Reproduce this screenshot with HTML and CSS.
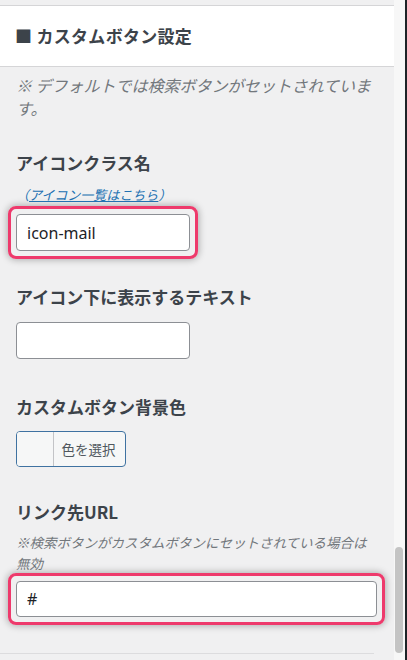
FILE: index.html
```html
<!DOCTYPE html>
<html lang="ja">
<head>
<meta charset="utf-8">
<title>カスタムボタン設定</title>
<link rel="stylesheet" href="styles.css">
</head>
<body>
<div class="frame">
  <div class="panel">
    <div class="topstrip"></div>
    <div class="header"><h3 class="title">■ カスタムボタン設定</h3></div>
    <div class="content">
      <p class="note note-first">※ デフォルトでは検索ボタンがセットされています。</p>

      <div class="label label-1">アイコンクラス名</div>
      <div class="link-row"><span class="paren">（</span><a class="link" href="#">アイコン一覧はこちら</a><span class="paren">）</span></div>
      <div class="hl hl-short"><input class="field field-short" type="text" value="icon-mail"></div>

      <div class="label label-2">アイコン下に表示するテキスト</div>
      <div class="field-row"><input class="field field-short field-plain" type="text" value=""></div>

      <div class="label label-3">カスタムボタン背景色</div>
      <div class="color-row">
        <button class="color-btn" type="button"><span class="swatch"></span><span class="color-text">色を選択</span></button>
      </div>

      <div class="label label-4">リンク先URL</div>
      <p class="note note-second">※検索ボタンがカスタムボタンにセットされている場合は無効</p>
      <div class="hl hl-wide"><input class="field field-wide" type="text" value="#"></div>

      <div class="divider"></div>
    </div>
  </div>
  <div class="track"><div class="thumb"></div></div>
  <div class="edge"></div>
</div>
</body>
</html>
```

FILE: styles.css
```css
* { box-sizing: border-box; }
html, body {
  margin: 0;
  padding: 0;
}
body {
  width: 407px;
  height: 660px;
  overflow: hidden;
  background: #f0f0f1;
  font-family: "Noto Sans", "Noto Sans CJK JP", sans-serif;
  color: #3c434a;
}
.frame {
  display: flex;
  height: 660px;
}
.panel {
  width: 394px;
  flex: none;
  background: #f0f0f1;
}
.topstrip {
  height: 6px;
  border-bottom: 1px solid #d5d5d7;
  background: #f0f0f1;
}
.header {
  height: 61px;
  background: #ffffff;
  border-bottom: 1px solid #d5d5d7;
  display: flex;
  align-items: center;
  padding: 0 16px 0 15px;
}
.title {
  margin: 0;
  font-size: 17px;
  line-height: 24px;
  font-weight: 700;
  color: #3c434a;
  font-family: "Noto Sans CJK JP", sans-serif;
  letter-spacing: 0.3px;
}
.content {
  padding: 7px 16px 0 16px;
}
.note {
  margin: 0;
  font-style: italic;
  color: #72777c;
  font-family: "Noto Sans CJK JP", sans-serif;
}
.note-first {
  font-size: 16px;
  line-height: 23px;
}
.note-second {
  font-size: 13.5px;
  line-height: 21px;
  margin-top: 8px;
}
.label {
  font-family: "Noto Sans CJK JP", sans-serif;
  font-weight: 700;
  font-size: 17px;
  line-height: 24px;
  color: #3c434a;
}
.label-1 { margin-top: 31px; }
.label-2 { margin-top: 26px; }
.label-3 { margin-top: 36px; }
.label-4 { margin-top: 33px; }
.link-row {
  margin-top: 10px;
  line-height: 20px;
  height: 20px;
  font-family: "Noto Sans CJK JP", sans-serif;
  font-size: 13px;
  font-style: italic;
  color: #2271b1;
}
.paren { color: #2271b1; }
.link {
  color: #2271b1;
  text-decoration: underline;
}
.hl {
  border: 3px solid #ee3a6c;
  border-radius: 8px;
  padding: 5px;
  box-shadow: 0 0 7px 1px rgba(0, 0, 0, 0.28);
}
.hl-short {
  display: block;
  width: 190px;
  margin: 1px 0 0 -8px;
}
.hl-wide {
  margin: -1px -7px 0 -8px;
}
.field {
  display: block;
  height: 37px;
  border: 1px solid #8c8f94;
  border-radius: 4px;
  background: #ffffff;
  padding: 0 10px;
  font-family: "Noto Sans", sans-serif;
  font-size: 16px;
  color: #1d2327;
  outline: none;
  margin: 0;
}
.field-short { width: 174px; }
.field-wide { width: 100%; height: 36px; }
.field-row { margin-top: 13px; }
.color-row { margin-top: 12px; }
.color-btn {
  display: flex;
  width: 110px;
  height: 36px;
  padding: 0;
  border: 1px solid #3f72a1;
  border-radius: 4px;
  background: #f6f7f7;
  overflow: hidden;
  cursor: pointer;
}
.swatch {
  width: 37px;
  height: 100%;
  background: #f6f7f7;
  border-right: 1px solid #c3c4c7;
}
.color-text {
  flex: 1;
  display: flex;
  align-items: center;
  justify-content: center;
  font-family: "Noto Sans CJK JP", sans-serif;
  font-size: 13.5px;
  color: #50575e;
  padding-right: 2px;
}
.divider {
  margin: 28px -16px 0 -16px;
  width: 374px;
  height: 1px;
  background: #dcdcde;
}
.track {
  width: 11px;
  flex: none;
  background: #f7f7f7;
  display: flex;
  flex-direction: column;
  justify-content: flex-end;
  padding: 0 2px 7px 1px;
}
.thumb {
  height: 106px;
  background: #c4c4c4;
  border-radius: 4px;
}
.edge {
  width: 2px;
  flex: none;
  background: #1d2327;
}
```
